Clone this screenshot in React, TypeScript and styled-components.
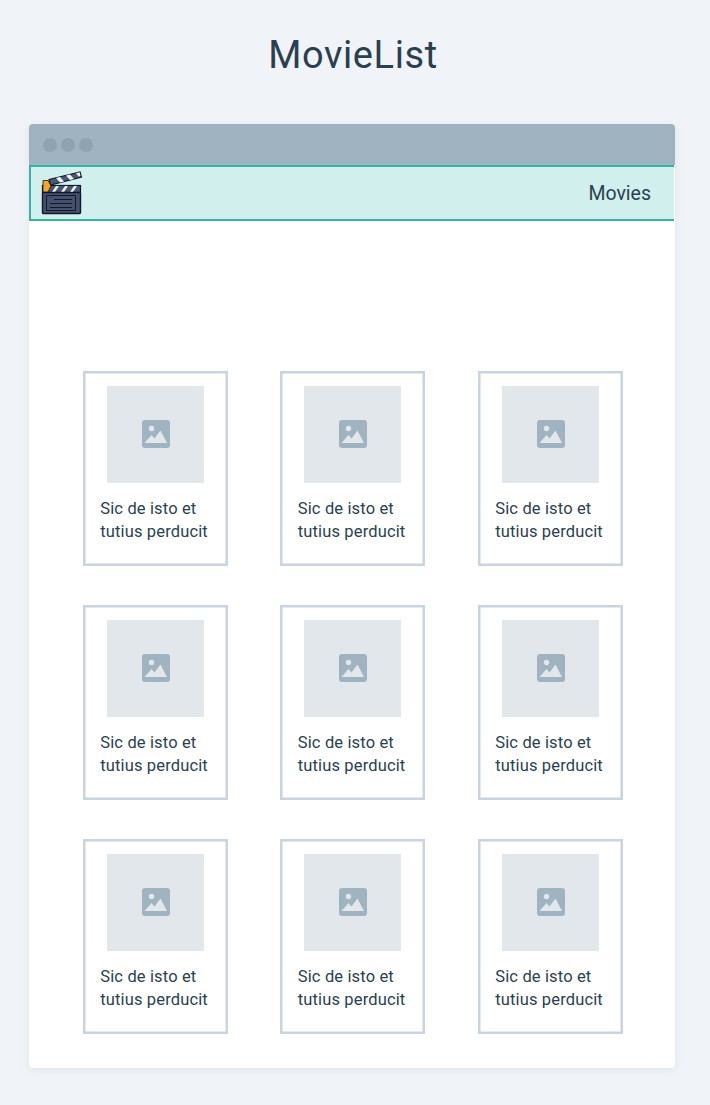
import styled, { createGlobalStyle } from "styled-components";

const GlobalStyle = createGlobalStyle`
    html, body {
        margin: 0;
        padding: 0;
        background-color: #f0f4f8;
    }
`;

const Page = styled.div`
    width: 710px;
    height: 1105px;
    box-sizing: border-box;
    padding: 0 35px 0 29px;
    overflow: hidden;
    font-family: Roboto, "Liberation Sans", sans-serif;
    color: #2a3f50;
`;

const Title = styled.h1`
    margin: 0;
    height: 124px;
    padding: 30px 0 0 2px;
    box-sizing: border-box;
    text-align: center;
    font-size: 38px;
    line-height: 50px;
    font-weight: 400;
    letter-spacing: 0.6px;
`;

const BrowserFrame = styled.div`
    height: 944px;
    background-color: #fff;
    border-radius: 4px;
    box-shadow: 0 2px 8px rgba(16, 42, 67, 0.07);
    overflow: hidden;
`;

const TitleBar = styled.div`
    height: 41px;
    box-sizing: border-box;
    padding-left: 14px;
    display: flex;
    align-items: center;
    gap: 4px;
    background-color: #9fb3c0;
`;

const Dot = styled.span`
    width: 14px;
    height: 14px;
    border-radius: 50%;
    background-color: #8fa3b2;
`;

const NavBar = styled.div`
    height: 56px;
    margin-right: 1px;
    box-sizing: border-box;
    display: flex;
    align-items: center;
    justify-content: space-between;
    padding: 0 23px 0 10px;
    background-color: #d1efed;
    border-style: solid;
    border-color: #35b3a4;
    border-width: 2px 0 2px 2px;
`;

const NavLink = styled.span`
    font-size: 19.5px;
`;

const CardGrid = styled.div`
    display: grid;
    grid-template-columns: repeat(3, 145px);
    justify-content: space-between;
    row-gap: 39px;
    padding: 150px 52.1px 0 53.9px;
`;

const Card = styled.div`
    height: 195px;
    box-sizing: border-box;
    border: 2px solid #c8d4df;
    box-shadow: inset 0 0 0 0.5px #c8d4df;
    padding: 13px 0 0 15.4px;
    display: flex;
    flex-direction: column;
`;

const Placeholder = styled.div`
    width: 97px;
    height: 97px;
    box-sizing: border-box;
    margin-left: 6.6px;
    padding: 0 0 1px 1px;
    display: flex;
    align-items: center;
    justify-content: center;
    background-color: #e2e7ec;
`;

const Caption = styled.p`
    margin: 14px 0 0;
    font-size: 16.5px;
    line-height: 23px;
    letter-spacing: 0.14px;
    white-space: nowrap;
`;

function ClapperIcon() {
    return (
        <svg width="42" height="44" viewBox="0 0 42 44">
            <rect x="1.500" y="14.500" width="38" height="7" fill="#4a5874" stroke="#10192b" strokeWidth="1.200" />
            <path d="M11 21l4-6h3l-4 6zM20 21l4-6h3l-4 6zM29 21l4-6h3l-4 6z" fill="#eef2f5" />
            <rect x="1.500" y="21.500" width="38" height="21" rx="1" fill="#44506c" stroke="#10192b" strokeWidth="1.400" />
            <path d="M5.500 24.500h29v15h-29z" fill="none" stroke="#10192b" strokeWidth="1" />
            <path d="M13 28.500h18M9 32.500h22M9 36.500h22" stroke="#10192b" strokeWidth="1" />
            <path d="M8 8.500L39 1l1.500 5L9.500 14z" fill="#4a5874" stroke="#10192b" strokeWidth="1.200" />
            <path d="M15 7l4 4.500 4-1-4-4.500zM25 4.500l4 4.500 4-1-4-4.500zM35 2l2.500 3.500 2-.5-.7-3.500z" fill="#eef2f5" />
            <path d="M2 9.500h5l3 5.500-3 6H2z" fill="#f5a623" stroke="#10192b" strokeWidth="0.800" />
        </svg>
    );
}

function ImageIcon() {
    return (
        <svg width="28" height="28" viewBox="0 0 28 28">
            <rect width="28" height="28" rx="3" fill="#9fb3c0" />
            <circle cx="9.500" cy="8.500" r="2.700" fill="#e2e7ec" />
            <path d="M2.500 23l7-8 3 3.500L18.500 10.500 25 23z" fill="#e2e7ec" />
        </svg>
    );
}

const cards = Array.from({ length: 9 }, (_, index) => index);

export default function App() {
    return (
        <Page>
            <GlobalStyle />
            <Title>MovieList</Title>
            <BrowserFrame>
                <TitleBar>
                    <Dot />
                    <Dot />
                    <Dot />
                </TitleBar>
                <NavBar>
                    <ClapperIcon />
                    <NavLink>Movies</NavLink>
                </NavBar>
                <CardGrid>
                    {cards.map((id) => (
                        <Card key={id}>
                            <Placeholder>
                                <ImageIcon />
                            </Placeholder>
                            <Caption>
                                Sic de isto et
                                <br />
                                tutius perducit
                            </Caption>
                        </Card>
                    ))}
                </CardGrid>
            </BrowserFrame>
        </Page>
    );
}
